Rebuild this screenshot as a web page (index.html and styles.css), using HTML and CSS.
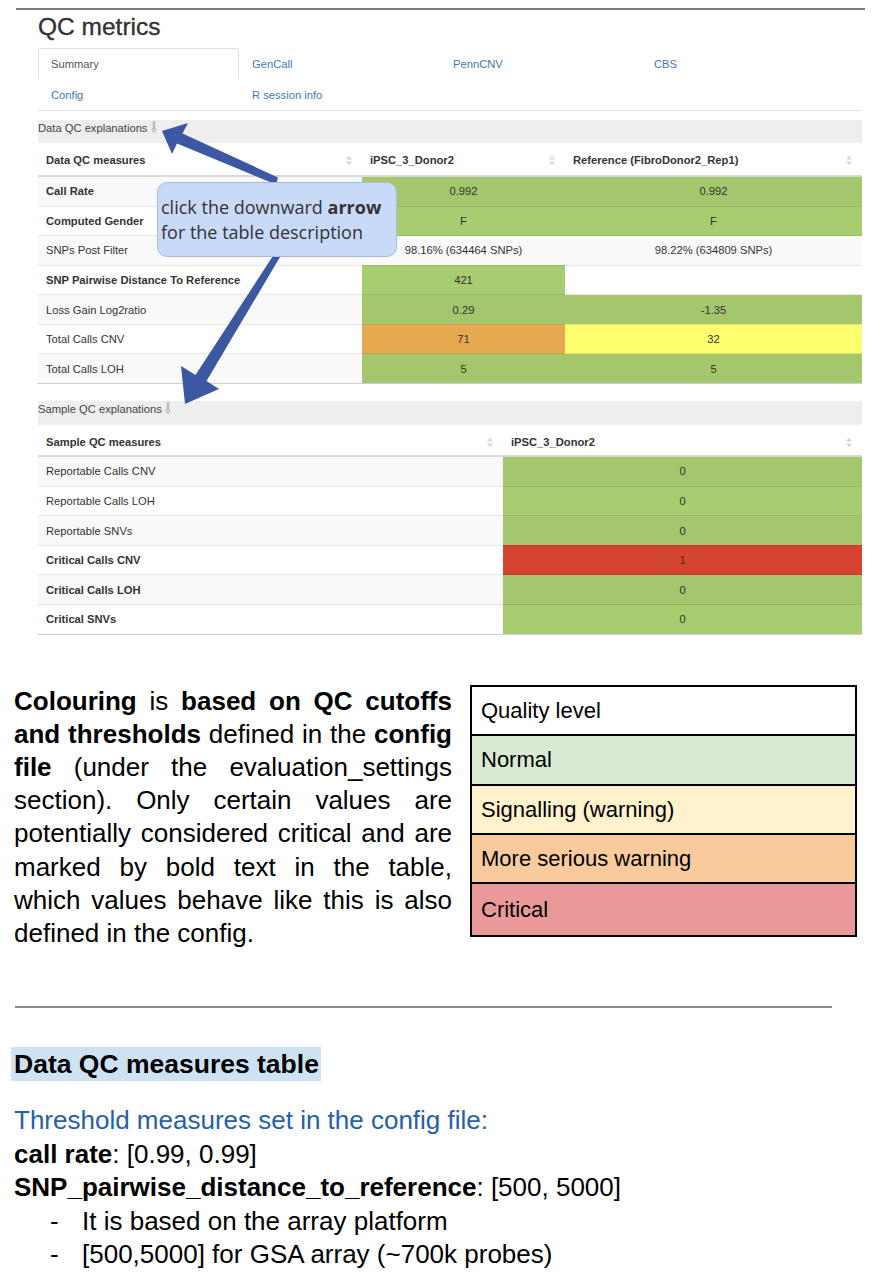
FILE: index.html
```html
<!DOCTYPE html>
<html>
<head>
<meta charset="utf-8">
<title>QC metrics</title>
<link rel="stylesheet" href="styles.css">
</head>
<body>
<div class="page">
  <div class="top-rule"></div>
  <div class="app">
    <h2 class="title">QC metrics</h2>
    <ul class="tabs">
      <li class="tab active">Summary</li>
      <li class="tab">GenCall</li>
      <li class="tab">PennCNV</li>
      <li class="tab">CBS</li>
      <li class="tab">Config</li>
      <li class="tab">R session info</li>
    </ul>

    <div class="expl">Data QC explanations <svg class="dn" width="6" height="12" viewBox="0 0 6 12"><path d="M2.3 0.5 H3.7 V8 H5.2 L3 11.5 L0.8 8 H2.3 Z" fill="none" stroke="#a0a0a0" stroke-width="0.8"/></svg></div>
    <table class="dt data">
      <colgroup><col style="width:324px"><col style="width:203px"><col style="width:297px"></colgroup>
      <thead>
        <tr>
          <th><div class="hc"><span>Data QC measures</span><svg class="sort" width="6" height="11" viewBox="0 0 6 11"><path d="M0 4.5 L3 0.5 L6 4.5 Z M0 6.5 L6 6.5 L3 10.5 Z" fill="#d8d8d8"/></svg></div></th>
          <th><div class="hc"><span>iPSC_3_Donor2</span><svg class="sort" width="6" height="11" viewBox="0 0 6 11"><path d="M0 4.5 L3 0.5 L6 4.5 Z M0 6.5 L6 6.5 L3 10.5 Z" fill="#d8d8d8"/></svg></div></th>
          <th><div class="hc"><span>Reference (FibroDonor2_Rep1)</span><svg class="sort" width="6" height="11" viewBox="0 0 6 11"><path d="M0 4.5 L3 0.5 L6 4.5 Z M0 6.5 L6 6.5 L3 10.5 Z" fill="#d8d8d8"/></svg></div></th>
        </tr>
      </thead>
      <tbody>
        <tr><td class="b">Call Rate</td><td class="v g">0.992</td><td class="v g">0.992</td></tr>
        <tr><td class="b">Computed Gender</td><td class="v g">F</td><td class="v g">F</td></tr>
        <tr><td>SNPs Post Filter</td><td class="v">98.16% (634464 SNPs)</td><td class="v">98.22% (634809 SNPs)</td></tr>
        <tr><td class="b">SNP Pairwise Distance To Reference</td><td class="v g">421</td><td class="v"></td></tr>
        <tr><td>Loss Gain Log2ratio</td><td class="v g">0.29</td><td class="v g">-1.35</td></tr>
        <tr><td>Total Calls CNV</td><td class="v o">71</td><td class="v y">32</td></tr>
        <tr><td>Total Calls LOH</td><td class="v g">5</td><td class="v g">5</td></tr>
      </tbody>
    </table>

    <div class="expl second">Sample QC explanations <svg class="dn" width="6" height="12" viewBox="0 0 6 12"><path d="M2.3 0.5 H3.7 V8 H5.2 L3 11.5 L0.8 8 H2.3 Z" fill="none" stroke="#a0a0a0" stroke-width="0.8"/></svg></div>
    <table class="dt sample">
      <colgroup><col style="width:465px"><col style="width:359px"></colgroup>
      <thead>
        <tr>
          <th class="sh"><div class="hc"><span>Sample QC measures</span><svg class="sort" width="6" height="11" viewBox="0 0 6 11"><path d="M0 4.5 L3 0.5 L6 4.5 Z M0 6.5 L6 6.5 L3 10.5 Z" fill="#d8d8d8"/></svg></div></th>
          <th class="sh"><div class="hc"><span>iPSC_3_Donor2</span><svg class="sort" width="6" height="11" viewBox="0 0 6 11"><path d="M0 4.5 L3 0.5 L6 4.5 Z M0 6.5 L6 6.5 L3 10.5 Z" fill="#d8d8d8"/></svg></div></th>
        </tr>
      </thead>
      <tbody>
        <tr><td>Reportable Calls CNV</td><td class="v g">0</td></tr>
        <tr><td>Reportable Calls LOH</td><td class="v g">0</td></tr>
        <tr><td>Reportable SNVs</td><td class="v g">0</td></tr>
        <tr><td class="b">Critical Calls CNV</td><td class="v r">1</td></tr>
        <tr><td class="b">Critical Calls LOH</td><td class="v g">0</td></tr>
        <tr><td class="b">Critical SNVs</td><td class="v g">0</td></tr>
      </tbody>
    </table>
  </div>

  <svg class="arrows" width="872" height="420" viewBox="0 0 872 420">
    <polygon fill="#3d58a3" points="278,177.5 182.5,133.5 188,123 162,131 172,154 177,143.5 276,184.5"/>
    <polygon fill="#3d58a3" points="275.5,252 195.5,375 181,366 185,404 219,389 206.5,381 281.5,254.5"/>
  </svg>
  <div class="callout">click the downward <b>arrow</b><br>for the table description</div>

  <section class="legend-row">
    <div class="colouring">
      <span class="jl"><b>Colouring</b> is <b>based on QC cutoffs</b></span>
      <span class="jl"><b>and thresholds</b> defined in the <b>config</b></span>
      <span class="jl"><b>file</b> (under the evaluation_settings</span>
      <span class="jl">section). Only certain values are</span>
      <span class="jl">potentially considered critical and are</span>
      <span class="jl">marked by bold text in the table,</span>
      <span class="jl">which values behave like this is also</span>
      <span class="ll">defined in the config.</span>
    </div>
    <table class="legend">
      <tr><td class="lq">Quality level</td></tr>
      <tr><td class="ln">Normal</td></tr>
      <tr><td class="ls">Signalling (warning)</td></tr>
      <tr><td class="lm">More serious warning</td></tr>
      <tr><td class="lc">Critical</td></tr>
    </table>
  </section>

  <div class="mid-rule"></div>

  <section class="notes">
    <h3 class="nh"><span>Data QC measures table</span></h3>
    <p class="blue">Threshold measures set in the config file:</p>
    <p><b>call rate</b>: [0.99, 0.99]</p>
    <p><b>SNP_pairwise_distance_to_reference</b>: [500, 5000]</p>
    <ul class="dash">
      <li><span class="d">-</span><span>It is based on the array platform</span></li>
      <li><span class="d">-</span><span>[500,5000] for GSA array (~700k probes)</span></li>
    </ul>
  </section>
</div>
</body>
</html>
```

FILE: styles.css
```css
* { box-sizing: border-box; }
html, body { margin: 0; padding: 0; background: #fff; }
body {
  width: 872px;
  font-family: "Liberation Sans", Arial, sans-serif;
  color: #333;
}
.page { position: relative; padding-top: 8px; padding-bottom: 20px; }

.top-rule { height: 2px; margin: 0 7px 0 16px; background: #7d7d7d; }

.app { width: 824px; margin-left: 38px; }
.title {
  font-size: 24.5px;
  line-height: 26.4px;
  font-weight: normal;
  -webkit-text-stroke: 0.35px #333;
  margin: 4px 0 7.5px;
  color: #333;
}
.tabs {
  list-style: none;
  margin: 0;
  padding: 0;
  display: flex;
  flex-wrap: wrap;
  border-bottom: 1px solid #e2e2e2;
}
.tab {
  width: 201px;
  height: 31px;
  padding: 0 12px;
  font-size: 11.2px;
  line-height: 31px;
  color: #3d79ba;
  border: 1px solid transparent;
  border-bottom: 0;
}
.tab.active { color: #555; border-color: #e0e0e0; border-radius: 3px 3px 0 0; }

.expl {
  margin-top: 9px;
  height: 23px;
  background: #eee;
  font-size: 11.2px;
  line-height: 17px;
  color: #444;
}
.expl.second { margin-top: 17px; height: 24px; }
.dn { vertical-align: -1px; }

.dt {
  width: 824px;
  border-collapse: collapse;
  table-layout: fixed;
  font-size: 11.2px;
  color: #333;
}
.dt th {
  text-align: left;
  font-weight: bold;
  line-height: 16px;
  padding: 9.5px 10px 6.5px 8px;
  border-bottom: 2px solid #d9d9d9;
}
.dt th.sh { padding-top: 9px; padding-bottom: 5px; }
.hc { display: flex; justify-content: space-between; align-items: center; }
.sort { flex: none; }
.dt td {
  line-height: 16px;
  padding: 6.3px 8px;
  border-top: 1px solid rgba(0, 0, 0, 0.09);
  white-space: nowrap;
}
.dt tbody tr:nth-child(odd) td { background: #f9f9f9; }
.dt tbody tr:last-child td { border-bottom: 1px solid #cfcfcf; }
.dt td.b { font-weight: bold; }
.dt td.v { text-align: center; }
.dt td.g { background: #a8cc70; }
.dt tbody tr:nth-child(odd) td.g { background: #a4c66c; }
.dt td.o { background: #e7a94f; }
.dt td.y { background: #fefe6f; }
.dt td.r { background: #d54431; }
.data tbody tr:nth-child(4) td.v:not(.g) { background: #fff; }

.arrows { position: absolute; left: 0; top: 0; pointer-events: none; }
.callout {
  position: absolute;
  left: 157px;
  top: 182px;
  width: 240px;
  height: 75px;
  padding: 12px 0 0 3px;
  background: #c9daf8;
  border: 1px solid #a9bcdf;
  border-radius: 10px;
  font-family: "Open Sans", "Liberation Sans", sans-serif;
  font-size: 18px;
  line-height: 25px;
  color: #333;
  white-space: nowrap;
}

.legend-row {
  display: flex;
  align-items: flex-start;
  margin-top: 50px;
  padding-left: 14px;
}
.colouring {
  width: 438px;
  font-size: 26px;
  line-height: 33.2px;
  color: #000;
}
.jl { display: block; text-align: justify; text-align-last: justify; white-space: nowrap; }
.ll { display: block; }

.legend {
  margin-left: 18px;
  margin-top: 0.5px;
  width: 387px;
  border-collapse: collapse;
  border: 2px solid #000;
  font-size: 22px;
  color: #000;
}
.legend td {
  border: 2px solid #000;
  padding: 0 9px;
  vertical-align: middle;
}
.lq { height: 49px; background: #fff; }
.ln { height: 50px; background: #d9ead3; }
.ls { height: 49px; background: #fff2cc; }
.lm { height: 49px; background: #f9cb9c; }
.lc { height: 53px; background: #ea9999; }

.mid-rule { height: 2px; margin: 56px 40px 0 15px; background: #8c8c8c; }

.notes {
  margin-left: 14px;
  font-size: 26px;
  color: #000;
}
.nh { margin: 39px 0 0 -3px; font-size: 26.5px; font-weight: bold; line-height: 34px; }
.nh span { display: inline-block; height: 34px; background: #cfe2f3; padding: 0 2px 0 3px; }
.notes p { margin: 0; line-height: 33.5px; }
.notes p.blue { margin-top: 23px; color: #2660a8; }
.dash { list-style: none; margin: 0; padding: 0 0 0 36px; }
.dash li { display: flex; line-height: 33.5px; }
.dash .d { width: 32px; }
```
